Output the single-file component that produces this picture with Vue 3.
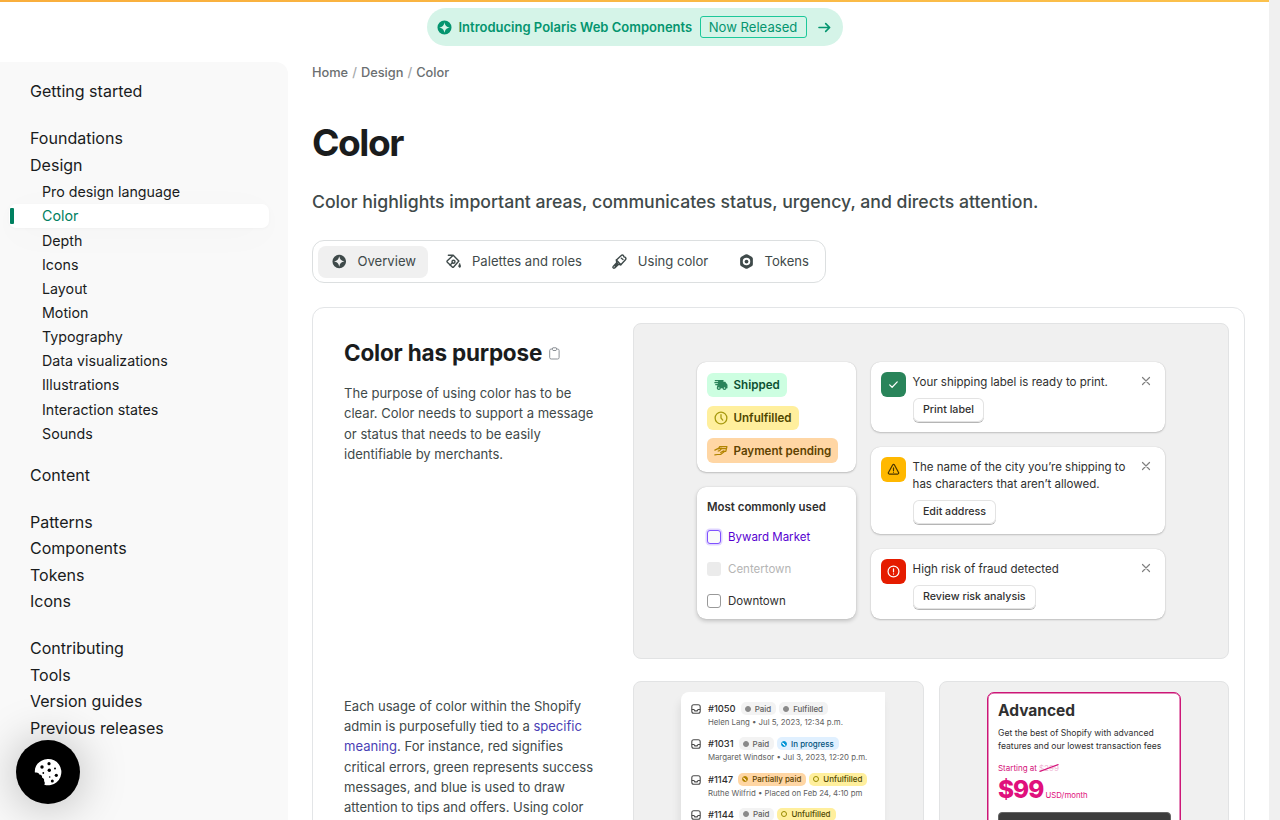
<script setup>
const navGroups = [
  [{ label: 'Getting started' }],
  [
    { label: 'Foundations' },
    {
      label: 'Design',
      children: [
        'Pro design language', 'Color', 'Depth', 'Icons', 'Layout', 'Motion',
        'Typography', 'Data visualizations', 'Illustrations', 'Interaction states', 'Sounds',
      ],
    },
    { label: 'Content' },
  ],
  [{ label: 'Patterns' }, { label: 'Components' }, { label: 'Tokens' }, { label: 'Icons' }],
  [{ label: 'Contributing' }, { label: 'Tools' }, { label: 'Version guides' }, { label: 'Previous releases' }],
]

const tabs = [
  { icon: 'overview', label: 'Overview' },
  { icon: 'bucket', label: 'Palettes and roles' },
  { icon: 'brush', label: 'Using color' },
  { icon: 'token', label: 'Tokens' },
]

const banners = [
  { tone: 'success', lines: ['Your shipping label is ready to print.'], action: 'Print label' },
  { tone: 'warning', lines: ['The name of the city you’re shipping to', 'has characters that aren’t allowed.'], action: 'Edit address' },
  { tone: 'critical', lines: ['High risk of fraud detected'], action: 'Review risk analysis' },
]

const orders = [
  { id: '#1050', badges: [['Paid', 'done'], ['Fulfilled', 'done']], meta: 'Helen Lang • Jul 5, 2023, 12:34 p.m.' },
  { id: '#1031', badges: [['Paid', 'done'], ['In progress', 'info']], meta: 'Margaret Windsor • Jul 3, 2023, 12:20 p.m.' },
  { id: '#1147', badges: [['Partially paid', 'partial'], ['Unfulfilled', 'open']], meta: 'Ruthe Wilfrid • Placed on Feb 24, 4:10 pm' },
  { id: '#1144', badges: [['Paid', 'done'], ['Unfulfilled', 'open']], meta: '' },
]
</script>

<template>
  <div class="page">
    <div class="top-line"></div>
    <header class="announce-row">
      <a class="announce">
        <svg class="announce-icon" viewBox="0 0 16 16"><path fill="currentColor" fill-rule="evenodd" d="M8 .5a7.5 7.5 0 1 0 0 15 7.5 7.5 0 0 0 0-15Zm0 1.800c.7 3.600 2.100 5 5.700 5.700-3.600.7-5 2.100-5.700 5.700-.7-3.600-2.100-5-5.700-5.700 3.600-.7 5-2.100 5.700-5.700Z" /></svg>
        <span class="announce-text">Introducing Polaris Web Components</span>
        <span class="announce-tag">Now Released</span>
        <svg class="announce-arrow" viewBox="0 0 14 12" fill="none" stroke="currentColor" stroke-width="1.800" stroke-linecap="round" stroke-linejoin="round"><path d="M1 6h11.500M8.300 1.700 12.600 6l-4.300 4.300" /></svg>
      </a>
    </header>

    <div class="body">
      <nav class="sidebar">
        <ul v-for="(group, g) in navGroups" :key="g" class="nav-group">
          <li v-for="item in group" :key="item.label">
            <a class="nav-link">{{ item.label }}</a>
            <ul v-if="item.children" class="nav-sub">
              <li v-for="child in item.children" :key="child" :class="['nav-child', { active: child === 'Color' }]">
                <span>{{ child }}</span>
              </li>
            </ul>
          </li>
        </ul>
      </nav>

      <main class="content">
        <div class="crumbs"><span>Home</span><i>/</i><span>Design</span><i>/</i><span>Color</span></div>
        <h1>Color</h1>
        <p class="lede">Color highlights important areas, communicates status, urgency, and directs attention.</p>

        <div class="tabs">
          <a v-for="tab in tabs" :key="tab.label" :class="['tab', 'tab-' + tab.icon]">
            <svg v-if="tab.icon === 'overview'" viewBox="0 0 16 16"><path fill="currentColor" fill-rule="evenodd" d="M8 .5a7.500 7.500 0 1 0 0 15A7.500 7.500 0 0 0 8 .5Zm0 1.800c.7 3.600 2.100 5 5.700 5.700-3.600.7-5 2.100-5.700 5.700-.7-3.600-2.100-5-5.700-5.700 3.600-.7 5-2.100 5.700-5.700Z" /></svg>
            <svg v-else-if="tab.icon === 'bucket'" viewBox="0 0 16 16" fill="none" stroke="currentColor" stroke-width="1.500" stroke-linecap="round" stroke-linejoin="round">
              <path d="M2.500 1.300h5.200l6 6.200-5.600 6.300a1 1 0 0 1-1.400 0L1.400 8.700a1 1 0 0 1 0-1.400L7.400 1.500" />
              <circle cx="8" cy="8.200" r="1.600" /><path d="M6.800 9.400 4.400 11.700" />
              <path d="M14.600 10.500c-.8 1.300-1 2-1 2.700a1 1 0 0 0 2 0c0-.7-.2-1.400-1-2.700Z" fill="currentColor" stroke-width=".8" />
            </svg>
            <svg v-else-if="tab.icon === 'brush'" viewBox="0 0 16 16" fill="none" stroke="currentColor" stroke-width="1.500" stroke-linecap="round" stroke-linejoin="round">
              <path d="m4.700 6.300 4.900-4.500c.9-.8 1.900-.9 2.600-.2l.6 1.500 1.500.6c.8.8.6 1.900-.2 2.800l-4.700 4.900Z" />
              <path d="M4.700 6.300 5 9.200l-3.700 4a1.100 1.100 0 0 0 1.600 1.600l3.900-3.700 2.600.3M6.300 9.600l-3 3.200M10 4.500l1.700 1.300" />
            </svg>
            <svg v-else viewBox="0 0 16 16"><path fill="currentColor" fill-rule="evenodd" d="M6.700.6a2.600 2.600 0 0 1 2.600 0l4.200 2.300c.8.5 1.300 1.300 1.300 2.200v5.800c0 .9-.5 1.700-1.300 2.200l-4.200 2.300a2.600 2.600 0 0 1-2.600 0l-4.200-2.300a2.600 2.600 0 0 1-1.300-2.200V5.100c0-.9.5-1.700 1.300-2.200L6.700.6ZM8 4a4 4 0 1 0 0 8 4 4 0 0 0 0-8Z" /><circle cx="8" cy="8" r="2" fill="currentColor" /></svg>
            <span>{{ tab.label }}</span>
          </a>
        </div>

        <section class="panel">
          <div class="panel-row">
            <div class="copy">
              <h2>
                Color has purpose
                <svg viewBox="0 0 11 13" fill="none" stroke="#8c9196" stroke-width="1"><rect x=".7" y="2" width="9.400" height="10" rx="1.500" /><path d="M3.200 2.200 3.800.8h3.400l.6 1.400-.8 1.300h-3Z" fill="#fff" stroke-linejoin="round" /></svg>
              </h2>
              <p>The purpose of using color has to be<br>clear. Color needs to support a message<br>or status that needs to be easily<br>identifiable by merchants.</p>
            </div>

            <div class="shot shot-main">
              <div class="demo-left">
                <div class="demo-card badges">
                  <span class="badge shipped">
                    <svg viewBox="0 0 16 14" fill="none" stroke="currentColor" stroke-width="1.400" stroke-linecap="round"><path d="M1.500 2H10M1 4.300h4M2 6.600h3" /><path d="M5.500 2H10v2h2.500l2.200 3v3H4L5 6Z" fill="currentColor" /><circle cx="5.500" cy="10.500" r="1.600" fill="#cdfee1" /><circle cx="12" cy="10.500" r="1.600" fill="#cdfee1" /></svg>
                    Shipped
                  </span>
                  <span class="badge unfulfilled">
                    <svg viewBox="0 0 16 16" fill="none" stroke="currentColor" stroke-width="1.500" stroke-linecap="round"><circle cx="8" cy="8" r="6.700" /><path d="M8 4.300V8l2 2.400" /></svg>
                    Unfulfilled
                  </span>
                  <span class="badge pending">
                    <svg viewBox="0 0 16 14" fill="none" stroke="currentColor" stroke-width="1.400" stroke-linecap="round" stroke-linejoin="round"><path d="M5 4.500 6.500 2h8.300l-1.300 5.500H9.500M6 4.200h8M1 6l4-2h4L6.500 6.500 4.800 7M1 11.500l3-.5h3.500L11.500 8c.8-.8-.3-1.600-1.100-1L7.700 8.800" /></svg>
                    Payment pending
                  </span>
                </div>
                <div class="demo-card choices">
                  <strong>Most commonly used</strong>
                  <label class="choice focus"><i></i>Byward Market</label>
                  <label class="choice disabled"><i></i>Centertown</label>
                  <label class="choice"><i></i>Downtown</label>
                </div>
              </div>
              <div class="demo-right">
                <div v-for="b in banners" :key="b.tone" class="demo-card banner">
                  <span :class="['tone', b.tone]">
                    <svg viewBox="0 0 16 16" fill="none" stroke="currentColor" stroke-width="1.500" stroke-linecap="round" stroke-linejoin="round">
                      <path v-if="b.tone === 'success'" d="m3.300 8.500 3 2.900 6.300-6.600" />
                      <template v-else-if="b.tone === 'warning'">
                        <path d="M6.900 2.500a1.300 1.300 0 0 1 2.300 0l5 9.100a1.300 1.300 0 0 1-1.200 2H3a1.300 1.300 0 0 1-1.200-2Z" /><path d="M8 6v3.200M8 11.300v.1" />
                      </template>
                      <template v-else>
                        <circle cx="8" cy="8" r="6.700" /><path d="M8 4.600v3.800M8 11v.1" />
                      </template>
                    </svg>
                  </span>
                  <div class="banner-body">
                    <div v-for="line in b.lines" :key="line" class="banner-line">{{ line }}</div>
                    <button>{{ b.action }}</button>
                  </div>
                  <svg class="close" viewBox="0 0 10 10" fill="none" stroke="#808080" stroke-width="1.200" stroke-linecap="round"><path d="m1.500 1.500 7 7M8.500 1.500l-7 7" /></svg>
                </div>
              </div>
            </div>
          </div>

          <div class="panel-row second">
            <div class="copy">
              <p>Each usage of color within the Shopify<br>admin is purposefully tied to a <a>specific<br>meaning</a>. For instance, red signifies<br>critical errors, green represents success<br>messages, and blue is used to draw<br>attention to tips and offers. Using color</p>
            </div>
            <div class="shot shot-orders">
              <div class="orders">
                <div v-for="o in orders" :key="o.id" class="order">
                  <svg class="inbox" viewBox="0 0 10 10" fill="none" stroke="#4a4a4a" stroke-width="1.100" stroke-linejoin="round"><rect x=".8" y=".8" width="8.400" height="8.400" rx="2" /><path d="M.8 5.500H3l.8 1.400h2.400L7 5.500h2.200" /></svg>
                  <div>
                    <div class="order-head">
                      <b>{{ o.id }}</b>
                      <span v-for="[text, kind] in o.badges" :key="text" :class="['pill', kind]"><i></i>{{ text }}</span>
                    </div>
                    <div class="order-meta">{{ o.meta }}</div>
                  </div>
                </div>
              </div>
            </div>
            <div class="shot shot-plan">
              <div class="plan">
                <h3>Advanced</h3>
                <p>Get the best of Shopify with advanced<br>features and our lowest transaction fees</p>
                <div class="starting">
                  Starting at
                  <span class="old">$299<svg viewBox="0 0 20 8"><path d="M.5 7.500 19.500.5" stroke="#d5127a" stroke-width="1.300" /></svg></span>
                </div>
                <div class="price"><b>$99</b><span>USD/month</span></div>
                <div class="select">Select Advanced</div>
              </div>
            </div>
          </div>
        </section>
      </main>
    </div>

    <button class="cookie" aria-label="Cookies">
      <svg viewBox="0 0 28 28">
        <path fill="#fff" d="M7.500 2.700A13.200 13.200 0 1 1 10.300 26.700c.8-1.300.6-2.700-.3-3.600.5-1.700-.3-3-1.900-3.400.2-2-.9-3.300-2.800-3.200-.4-1.600-2-2.500-4.400-1.900C.3 9.500 3 5 7.500 2.700Z" />
        <g fill="#000"><circle cx="8" cy="9" r="1.700" /><circle cx="15" cy="5.700" r="1.600" /><circle cx="15.300" cy="12.300" r="1.700" /><circle cx="21" cy="10.500" r="1" /><circle cx="9.300" cy="15" r=".9" /><circle cx="22.300" cy="17.300" r="1.600" /><circle cx="15.700" cy="19" r=".8" /><circle cx="18.300" cy="23" r="1.500" /></g>
      </svg>
    </button>
  </div>
</template>

<style>
body {
  background: #f0f0f0;
  overflow: hidden;
}
</style>

<style scoped>
* {
  box-sizing: border-box;
}
.page {
  position: relative;
  width: 1269px;
  height: 820px;
  overflow: hidden;
  background: #fff;
  font-family: Inter, 'Liberation Sans', sans-serif;
  color: #1a1c1d;
}
ul {
  list-style: none;
  margin: 0;
  padding: 0;
}
h1, h2, h3, p {
  margin: 0;
}
.top-line {
  height: 2px;
  background: linear-gradient(90deg, #f9ae3c, #fbc14c);
}

/* announcement */
.announce-row {
  display: flex;
  justify-content: center;
  height: 60px;
  padding-top: 6px;
}
.announce {
  display: flex;
  align-items: center;
  width: 416px;
  height: 38px;
  padding-left: 10px;
  border-radius: 19px;
  background: #d5f4e8;
  color: #04956f;
  font-size: 13px;
  white-space: nowrap;
}
.announce-icon {
  width: 15px;
  height: 15px;
  margin-right: 7px;
}
.announce-text {
  width: 234px;
  font-weight: 600;
}
.announce-tag {
  width: 107px;
  height: 22px;
  margin: 0 11px 0 7px;
  border: 1px solid #1cc89a;
  border-radius: 3px;
  font-size: 13.100px;
  line-height: 20px;
  text-align: center;
}
.announce-arrow {
  width: 13px;
  height: 11px;
}

/* sidebar */
.body {
  display: flex;
  align-items: flex-start;
}
.sidebar {
  flex: none;
  width: 288px;
  height: 758px;
  padding: 16px 19px 0 10px;
  border-radius: 0 12px 0 0;
  background: #f9f9f9;
  overflow: hidden;
}
.nav-group {
  margin-bottom: 20.400px;
}
.nav-link {
  display: block;
  height: 26.600px;
  padding-left: 20px;
  font-size: 16.050px;
  line-height: 26.600px;
}
.nav-sub {
  padding: 1.500px 0 16.300px;
}
.nav-child {
  display: flex;
  align-items: center;
  width: 260px;
  height: 24.150px;
  margin-left: -1px;
  padding-left: 33px;
  border-radius: 7px;
  font-size: 14.250px;
}
.nav-child.active {
  padding-left: 0;
  background: #fff;
  color: #008060;
  box-shadow: 0 1px 3px rgba(0, 0, 0, .03), 0 6px 40px rgba(0, 0, 0, .025);
}
.nav-child.active::before {
  content: '';
  width: 4px;
  height: 16px;
  margin: 0 28px 0 1px;
  border-radius: 1px;
  background: #008060;
}

/* main column */
.content {
  width: 933px;
  margin-left: 24px;
}
.crumbs {
  display: flex;
  height: 21px;
  line-height: 21px;
  font-size: 12.800px;
  font-weight: 500;
  color: #6b6f71;
}
.crumbs i {
  margin: 0 4px;
  font-style: normal;
  color: #a5a8aa;
}
h1 {
  margin-top: 36px;
  font-size: 37.200px;
  line-height: 48px;
  letter-spacing: -1.500px;
}
.lede {
  margin-top: 22px;
  font-size: 17.650px;
  line-height: 25px;
  font-weight: 500;
  color: #3f4a4a;
  white-space: nowrap;
}
.tabs {
  display: flex;
  align-items: center;
  width: 514px;
  height: 43px;
  margin-top: 26px;
  padding: 0 4px 0 5px;
  border: 1px solid #dcdfe0;
  border-radius: 12px;
}
.tab {
  display: flex;
  align-items: center;
  height: 32px;
  padding: 0 12px 1px 14px;
  border-radius: 8px;
  font-size: 13.100px;
  color: #3f4a4a;
  white-space: nowrap;
}
.tab svg {
  width: 15px;
  height: 15px;
  margin-right: 11px;
}
.tab-overview {
  width: 110px;
  margin-right: 4px;
  background: #f0f0f0;
}
.tab-bucket {
  width: 166px;
}
.tab-brush {
  width: 127px;
}

/* panel */
.panel {
  height: 600px;
  margin-top: 24px;
  padding: 15px 15px 0 31px;
  border: 1px solid #e3e5e7;
  border-radius: 12px;
}
.panel-row {
  display: flex;
}
.second {
  margin-top: 22px;
}
.copy {
  flex: none;
  width: 289px;
  color: #3f4a4a;
  font-size: 13.050px;
  line-height: 20.300px;
  white-space: nowrap;
}
h2 {
  display: flex;
  align-items: center;
  height: 30px;
  margin: 15px 0 15px;
  font-size: 22.500px;
  letter-spacing: -.190px;
  color: #1a1c1d;
}
h2 svg {
  width: 11px;
  height: 13px;
  margin-left: 6.500px;
}
.second .copy {
  padding-top: 14.700px;
}
.copy a {
  color: #4a3fb5;
}
.shot {
  border: 1px solid #e2e3e4;
  border-radius: 8px;
  background: #f0f0f0;
  overflow: hidden;
}
.shot-main {
  display: flex;
  gap: 15px;
  width: 596px;
  height: 336px;
  padding: 38.400px 0 0 63px;
}
.demo-left, .demo-right {
  display: flex;
  flex-direction: column;
  gap: 15.200px;
}
.demo-left {
  width: 158.600px;
}
.demo-right {
  width: 294px;
}
.demo-card {
  border-radius: 9px;
  background: #fff;
  box-shadow: 0 1px 2px rgba(0, 0, 0, .2), 0 0 1px rgba(0, 0, 0, .2);
  font-size: 11.600px;
  color: #303030;
  white-space: nowrap;
}
.badges {
  display: flex;
  flex-direction: column;
  align-items: flex-start;
  gap: 8.200px;
  height: 109.700px;
  padding: 10.500px 10px 0;
}
.badge {
  display: flex;
  align-items: center;
  height: 24.600px;
  padding: 0 7px;
  border-radius: 6px;
  font-weight: 600;
}
.badge svg {
  width: 14px;
  height: 14px;
  margin-right: 5.500px;
}
.shipped {
  background: #cdfee1;
  color: #0c5132;
}
.shipped svg {
  color: #29845a;
}
.unfulfilled {
  background: #ffef9d;
  color: #4f4700;
}
.unfulfilled svg {
  color: #a89a10;
}
.pending {
  background: #ffd6a4;
  color: #5e4200;
}
.pending svg {
  color: #b28400;
}
.choices {
  height: 131.300px;
  padding: 10px;
  box-shadow: 0 2px 4px rgba(0, 0, 0, .2), 0 0 1px rgba(0, 0, 0, .2);
}
.choices strong {
  display: block;
  height: 20px;
  line-height: 20px;
  margin-bottom: 3.300px;
  font-weight: 600;
  font-size: 11.450px;
}
.choice {
  display: flex;
  align-items: center;
  height: 32px;
  font-size: 11.500px;
}
.choice i {
  width: 14px;
  height: 14px;
  margin-right: 7px;
  border: 1px solid #999;
  border-radius: 3px;
}
.focus {
  color: #5700d1;
}
.focus i {
  border-color: #8051ff;
  background: #fafafa;
  box-shadow: 0 0 0 1.500px #e0d5ff;
}
.disabled {
  color: #b5b5b5;
}
.disabled i {
  border: none;
  background: #ebebeb;
}
.banner {
  display: flex;
  align-items: flex-start;
  padding: 10px 14px 10.200px 10px;
}
.tone {
  display: flex;
  align-items: center;
  justify-content: center;
  width: 25px;
  height: 25px;
  margin-right: 7px;
  border-radius: 6px;
}
.tone svg {
  width: 13px;
  height: 13px;
}
.success {
  background: #29845a;
  color: #fff;
}
.warning {
  background: #ffb800;
  color: #4a3500;
}
.critical {
  background: #e51c00;
  color: #fff;
}
.banner-body {
  flex: 1;
  padding-top: 1.800px;
}
.banner-line {
  height: 17.500px;
  line-height: 17.500px;
  font-size: 11.520px;
}
.banner button {
  display: block;
  height: 24px;
  margin-top: 6px;
  padding: 0 10.300px;
  border: 0;
  border-radius: 6px;
  background: #fff;
  box-shadow: 0 1px 0 #b5b5b5, inset 0 0 0 1px #e3e3e3;
  font: 500 10.700px Inter, sans-serif;
  color: #303030;
}
.close {
  width: 10px;
  height: 10px;
  margin-top: 4px;
}

/* orders shot */
.shot-orders {
  width: 291px;
  height: 336px;
  margin-right: 15px;
  padding: 10px 0 0 47.400px;
}
.orders {
  width: 204px;
  height: 320px;
  padding: 8px 0 0 9.500px;
  border-radius: 8px 0 0 0;
  background: #fff;
  box-shadow: -2px 8px 8px rgba(0, 0, 0, .08);
  white-space: nowrap;
}
.order {
  display: flex;
  height: 35.300px;
}
.inbox {
  width: 10px;
  height: 10px;
  margin: 4px 7px 0 0;
}
.order-head {
  display: flex;
  align-items: center;
  height: 17px;
}
.order-head b {
  margin-right: 5px;
  font-size: 9.400px;
  font-weight: 500;
  color: #303030;
}
.pill {
  display: flex;
  align-items: center;
  height: 13px;
  margin-right: 3px;
  padding: 0 5px 0 4px;
  border-radius: 5px;
  font-size: 7.950px;
  font-weight: 500;
}
.pill i {
  width: 6px;
  height: 6px;
  margin-right: 4px;
  border: 1px solid currentColor;
  border-radius: 3px;
}
.done {
  background: #f3f3f3;
  color: #616161;
}
.done i {
  border-color: #8a8a8a;
  background: #8a8a8a;
}
.info {
  background: #e0f0ff;
  color: #00527c;
}
.info i {
  border-color: #0094d5;
  background: linear-gradient(45deg, #0094d5 35%, #e0f0ff 35%, #e0f0ff 60%, #0094d5 60%);
}
.partial {
  background: #ffd6a4;
  color: #5e4200;
}
.partial i {
  border-color: #b28400;
  background: linear-gradient(45deg, #b28400 35%, #ffd6a4 35%, #ffd6a4 60%, #b28400 60%);
}
.open {
  background: #ffef9d;
  color: #4f4700;
}
.open i {
  border-color: #998a00;
}
.order-meta {
  height: 10px;
  line-height: 10px;
  font-size: 7.830px;
  color: #616161;
}

/* plan shot */
.shot-plan {
  width: 290px;
  height: 336px;
  padding: 10px 0 0 47.400px;
}
.plan {
  width: 194px;
  height: 320px;
  padding: 9px 10px 0 9.600px;
  border: 1px solid #cc1677;
  border-radius: 7px;
  background: #fff;
  box-shadow: inset 0 0 0 .5px #cc1677;
  color: #303030;
  white-space: nowrap;
}
.plan h3 {
  font-size: 15.500px;
  line-height: 18px;
}
.plan p {
  margin-top: 7px;
  font-size: 8.600px;
  line-height: 13px;
}
.starting {
  display: flex;
  align-items: center;
  gap: 2px;
  height: 12px;
  margin-top: 9px;
  font-size: 8px;
  color: #d5127a;
}
.old {
  position: relative;
  color: #efb5d3;
}
.old svg {
  position: absolute;
  top: 1px;
  left: 0;
  width: 20px;
  height: 8px;
}
.price {
  display: flex;
  align-items: baseline;
  gap: 2px;
  height: 30px;
  line-height: 30px;
  color: #e0107c;
}
.price b {
  font-size: 24.300px;
  font-weight: 800;
  letter-spacing: -.9px;
}
.price span {
  font-size: 7.800px;
}
.select {
  width: 173px;
  height: 24px;
  margin-top: 8px;
  border: 1px solid #666;
  border-radius: 4px;
  background: #3d3d3d;
  color: #fff;
  font-size: 8.700px;
  line-height: 22px;
  text-align: center;
}

.cookie {
  position: absolute;
  left: 16px;
  top: 740px;
  width: 64px;
  height: 64px;
  padding: 0;
  border: 0;
  border-radius: 50%;
  background: #000;
  box-shadow: 0 2px 48px rgba(0, 0, 0, .28);
}
.cookie svg {
  display: block;
  width: 28px;
  height: 28px;
  margin: 0 0 0 18px;
}
</style>
